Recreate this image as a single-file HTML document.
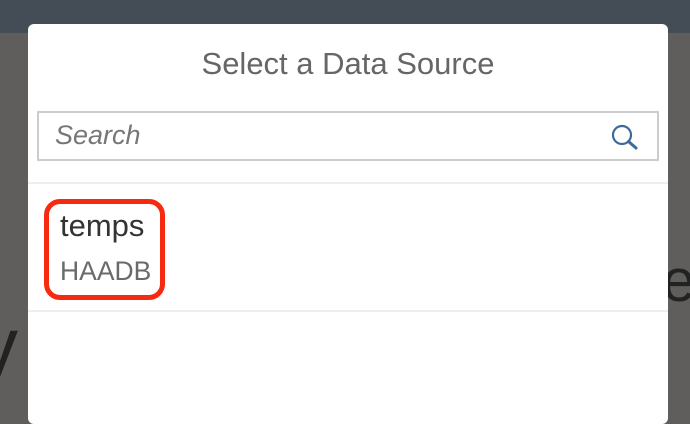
<!DOCTYPE html>
<html><head><style>
body{margin:0;width:690px;height:416px;overflow:hidden;background:#5f5e5c;position:relative;font-family:"Liberation Sans",sans-serif}
.bar{position:absolute;left:0;top:0;width:690px;height:33px;background:#444d56}
.bgt{position:absolute;color:#222;font-size:60px}
.dlg{position:absolute;left:28px;top:24px;width:640px;height:400px;background:#fff;border-radius:6px}
.title{position:absolute;left:0;width:640px;top:22px;text-align:center;font-size:31px;color:#666}
.search{position:absolute;left:9px;top:87px;width:618px;height:46px;border:2px solid #ccc}
.search span{position:absolute;left:16px;top:7px;font-size:27px;font-style:italic;color:#777}
.line{position:absolute;left:0;width:640px;height:2px;background:#eee}
.box{position:absolute;left:16px;top:175px;width:111px;height:91px;border:5px solid #f52a10;border-radius:16px}
.t1{position:absolute;left:32px;top:184px;font-size:31px;color:#333}
.t2{position:absolute;left:32px;top:232px;font-size:26.5px;color:#6a6a6a}
</style></head><body>
<div class="bar"></div>
<div class="bgt" style="left:-22px;top:300px;font-size:80px">y</div>
<div class="bgt" style="left:662px;top:246px">e</div>
<div class="dlg">
<div class="title">Select a Data Source</div>
<div class="search"><span>Search</span>
<svg style="position:absolute;left:570px;top:9px" width="32" height="32" viewBox="0 0 32 32"><circle cx="13" cy="13" r="9" fill="none" stroke="#3d6a99" stroke-width="2.2"/><line x1="19.5" y1="19.5" x2="27" y2="26" stroke="#3d6a99" stroke-width="3" stroke-linecap="round"/></svg>
</div>
<div class="line" style="top:158px"></div>
<div class="box"></div>
<div class="t1">temps</div>
<div class="t2">HAADB</div>
<div class="line" style="top:286px"></div>
</div>
</body></html>
